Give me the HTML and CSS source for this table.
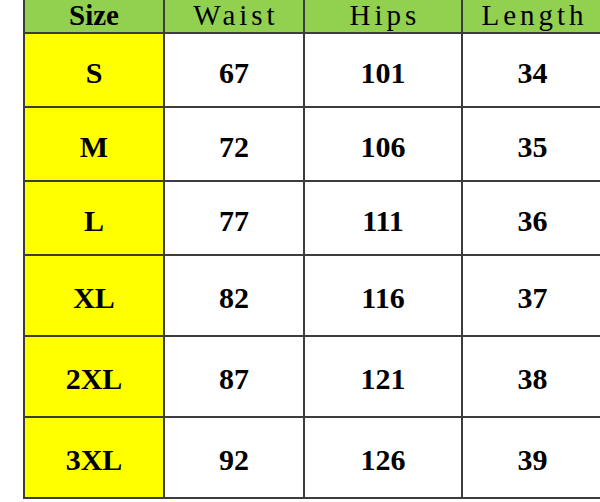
FILE: index.html
```html
<!DOCTYPE html>
<html>
<head>
<meta charset="utf-8">
<link rel="stylesheet" href="styles.css">
</head>
<body>
<div class="chart">
  <div class="cell head size">Size</div>
  <div class="cell head mono">Waist</div>
  <div class="cell head mono">Hips</div>
  <div class="cell head mono">Length</div>

  <div class="cell label">S</div>
  <div class="cell">67</div>
  <div class="cell">101</div>
  <div class="cell">34</div>

  <div class="cell label">M</div>
  <div class="cell">72</div>
  <div class="cell">106</div>
  <div class="cell">35</div>

  <div class="cell label">L</div>
  <div class="cell">77</div>
  <div class="cell">111</div>
  <div class="cell">36</div>

  <div class="cell label">XL</div>
  <div class="cell">82</div>
  <div class="cell">116</div>
  <div class="cell">37</div>

  <div class="cell label">2XL</div>
  <div class="cell">87</div>
  <div class="cell">121</div>
  <div class="cell">38</div>

  <div class="cell label">3XL</div>
  <div class="cell">92</div>
  <div class="cell">126</div>
  <div class="cell">39</div>
</div>
</body>
</html>
```

FILE: styles.css
```css
html, body {
  margin: 0;
  padding: 0;
  background: #ffffff;
  overflow: hidden;
  width: 600px;
  height: 502px;
}

.chart {
  margin-left: 23px;
  width: 579px;
  display: grid;
  grid-template-columns: 138px 138px 156px 139px;
  grid-template-rows: 32px 72px 72px 72px 79px 79px 79px;
  gap: 2px;
  padding-left: 2px;
  padding-bottom: 2px;
  background: #3c3c3c;
  font-family: "Liberation Serif", "Times New Roman", serif;
  font-weight: bold;
  font-size: 30px;
  color: #000;
}

.cell {
  background: #ffffff;
  display: flex;
  align-items: center;
  justify-content: center;
  padding-top: 5px;
  line-height: 1;
}

.head {
  background: #92d050;
  padding-top: 0;
  padding-bottom: 2px;
  line-height: 28px;
  font-size: 29px;
}

.mono {
  font-weight: normal;
  font-size: 29px;
  letter-spacing: 4px;
  padding-left: 4px;
}

.label {
  background: #ffff00;
}
```
